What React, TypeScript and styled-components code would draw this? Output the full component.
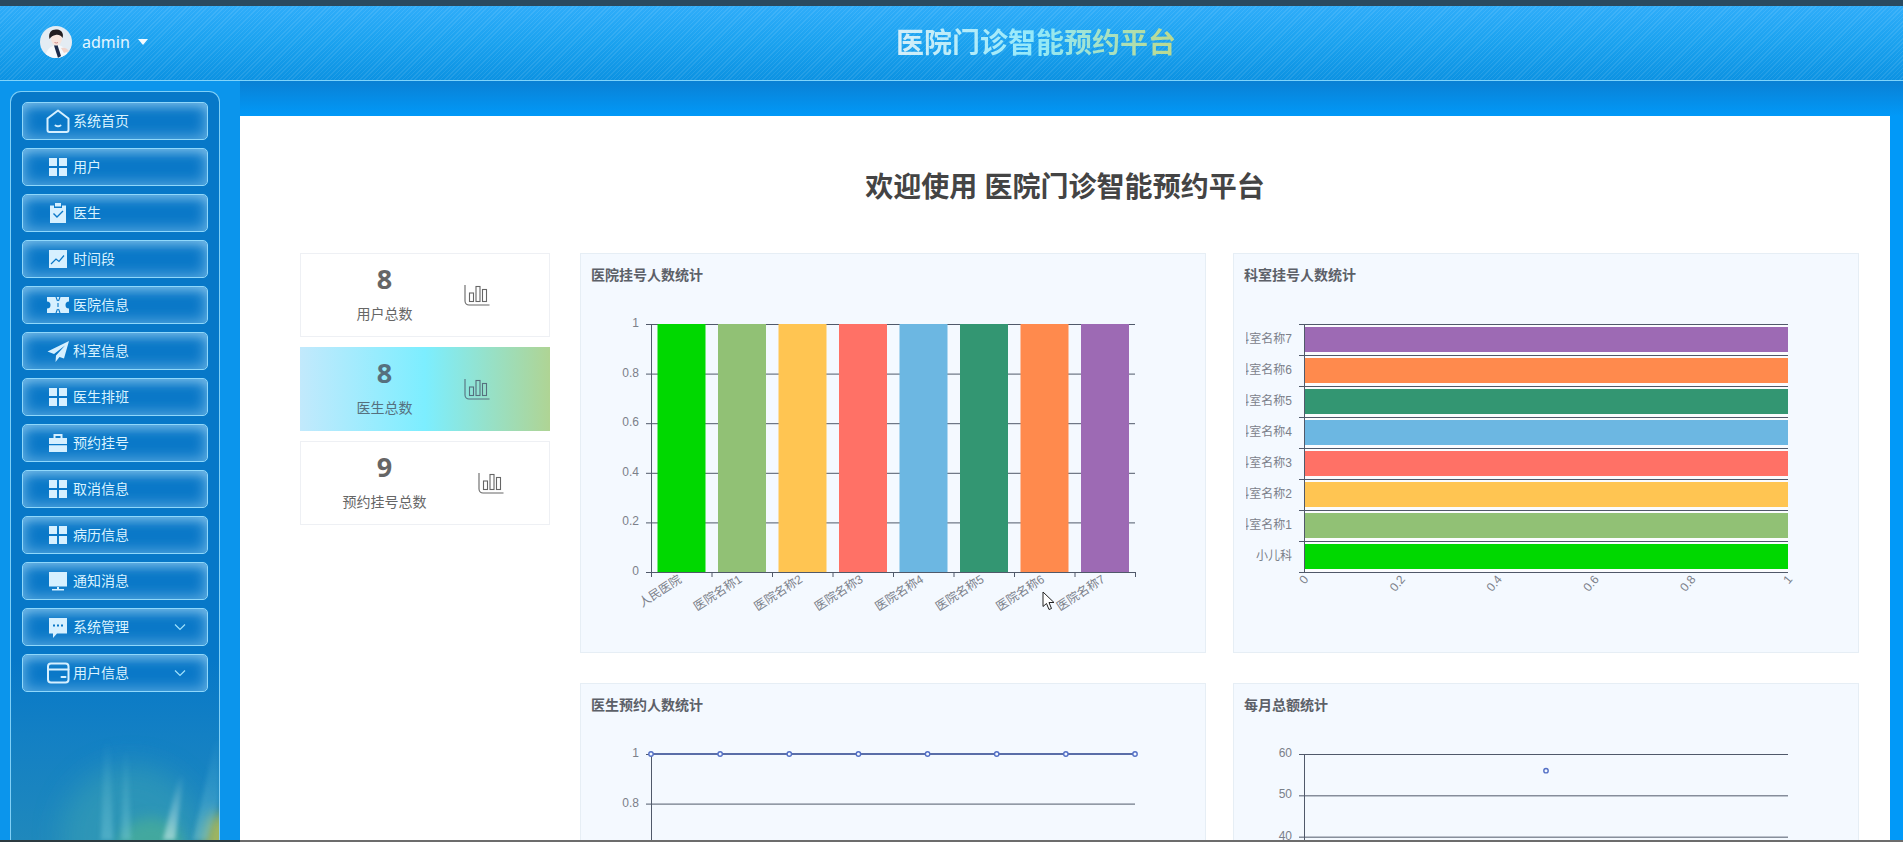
import React from "react";
import styled, { createGlobalStyle } from "styled-components";

const Global = createGlobalStyle`
  html, body { margin: 0; padding: 0; height: 100%; overflow: hidden; }
  #root { height: 100%; }
  * { box-sizing: border-box; }
  body { font-family: "Noto Sans", "Noto Sans CJK SC", sans-serif; }
`;

const Page = styled.div`
  position: relative;
  height: 842px;
  display: flex;
  flex-direction: column;
  overflow: hidden;
  background: #0d96ec;
`;
const TopStrip = styled.div`
  height: 6px;
  flex: none;
  background: #2a4a60;
`;
const Header = styled.header`
  height: 75px;
  flex: none;
  display: flex;
  align-items: center;
  padding-bottom: 2px;
  border-bottom: 1px solid #7fd4fb;
  background:
    repeating-linear-gradient(135deg, rgba(255,255,255,.09) 0 1px, rgba(255,255,255,0) 1px 3px),
    linear-gradient(180deg, #2fadfa 0%, #1ba2ef 50%, #0c92e2 100%);
`;
const UserBlock = styled.div`
  width: 169px;
  flex: none;
  padding-left: 40px;
  display: flex;
  align-items: center;
`;
const Avatar = styled.svg`
  width: 32px;
  height: 32px;
  border-radius: 50%;
  flex: none;
`;
const UserName = styled.span`
  margin-left: 10px;
  font-size: 16px;
  color: #e4f6ff;
  line-height: 20px;
`;
const Caret = styled.i`
  margin-left: 8px;
  margin-top: -1px;
  width: 0;
  height: 0;
  border-left: 5px solid transparent;
  border-right: 5px solid transparent;
  border-top: 6px solid #f4fbff;
`;
const AppTitle = styled.h1`
  flex: 1;
  margin: 0;
  display: flex;
  justify-content: center;
  font-size: 28px;
  font-weight: 700;
  line-height: 36px;
`;
const AppTitleText = styled.span`
  background: linear-gradient(90deg, #d6eef8 0%, #92e9fa 50%, #bcd98c 100%);
  -webkit-background-clip: text;
  background-clip: text;
  color: transparent;
`;
const Body = styled.div`
  flex: 1;
  min-height: 0;
  display: flex;
`;
const Sidebar = styled.aside`
  width: 240px;
  flex: none;
  padding: 10px 20px 0 10px;
  background: #0b95ec;
  display: flex;
`;
const SidePanel = styled.nav`
  position: relative;
  flex: 1;
  overflow: hidden;
  border: 1px solid #7fd0f7;
  border-bottom: none;
  border-radius: 11px 11px 0 0;
  background: linear-gradient(180deg, #0778c8 0%, #0778c8 76%, #1380c4 86%, #1f88bc 100%);
  padding: 10px 11px 0;
  display: flex;
  flex-direction: column;
  gap: 8px;
`;
const Aurora = styled.svg`
  position: absolute;
  left: 0;
  bottom: 0;
  width: 208px;
  height: 190px;
`;
const MenuButton = styled.a`
  position: relative;
  height: 38px;
  flex: none;
  display: flex;
  align-items: center;
  padding-left: 23px;
  border: 1px solid #8fd8fb;
  border-radius: 5px;
  background: #0a78c8;
  box-shadow: inset 0 0 14px 2px rgba(190, 232, 255, .45), inset 0 7px 9px -3px rgba(210, 240, 255, .28);
  color: #d9f3ff;
  font-size: 14px;
`;
const MenuIcon = styled.svg`
  width: 24px;
  height: 24px;
  flex: none;
  margin-right: 3px;
`;
const MenuLabel = styled.span`
  flex: 1;
  line-height: 20px;
  margin-top: -1px;
`;
const Chevron = styled.svg`
  width: 12px;
  height: 8px;
  margin-right: 21px;
  flex: none;
`;
const Main = styled.main`
  flex: 1;
  min-width: 0;
  display: flex;
  flex-direction: column;
  overflow: hidden;
  padding-right: 13px;
  background: #0199f8;
`;
const Band = styled.div`
  height: 35px;
  flex: none;
  margin-right: -13px;
  background: linear-gradient(180deg, #0a80d4 0%, #0199f8 100%);
`;
const Content = styled.section`
  flex: 1;
  min-height: 0;
  overflow: hidden;
  background: #fff;
  padding: 50px 31px 0 60px;
`;
const PageTitle = styled.h2`
  margin: 0 -31px 47px -60px;
  text-align: center;
  font-size: 28px;
  line-height: 40px;
  font-weight: 700;
  color: #444;
`;
const Dashboard = styled.div`
  display: flex;
  align-items: flex-start;
  gap: 30px;
`;
const StatColumn = styled.div`
  width: 250px;
  flex: none;
  display: flex;
  flex-direction: column;
  gap: 10px;
`;
const StatCard = styled.div<{ $active?: boolean }>`
  height: 84px;
  display: flex;
  align-items: center;
  justify-content: center;
  gap: 51px;
  padding-right: 4px;
  border: ${(p) => (p.$active ? "none" : "1px solid #eef0f4")};
  color: ${(p) => (p.$active ? "#56707e" : "#666")};
  background: ${(p) =>
    p.$active ? "linear-gradient(90deg, #c2e9fc 0%, #7ceeff 50%, #afd494 100%)" : "#fff"};
`;
const StatText = styled.div`
  display: flex;
  flex-direction: column;
  align-items: center;
  margin-top: -9px;
`;
const StatNumber = styled.strong`
  font-size: 27px;
  line-height: 36px;
  font-weight: 700;
`;
const StatLabel = styled.span`
  margin-top: 6px;
  font-size: 14px;
  line-height: 22px;
  margin-bottom: -4px;
`;
const StatIcon = styled.svg`
  width: 26px;
  height: 22px;
  flex: none;
`;
const ChartGrid = styled.div`
  display: grid;
  grid-template-columns: 626px 626px;
  grid-auto-rows: 400px;
  gap: 30px 27px;
`;
const ChartCard = styled.article`
  border: 1px solid #e6eef5;
  background: #f4f9ff;
  padding: 10px;
`;
const ChartTitle = styled.h3`
  margin: 0;
  height: 22px;
  font-size: 14px;
  line-height: 21px;
  font-weight: 700;
  color: #5c6068;
`;
const ChartSvg = styled.svg`
  display: block;
  width: 604px;
  height: 356px;
  font-family: "Liberation Sans", "Noto Sans CJK SC", sans-serif;
  font-size: 12px;
`;
const BottomStrip = styled.div`
  height: 2px;
  flex: none;
  background: linear-gradient(90deg, #2c3a40 0 240px, #6c6c6c 240px);
`;
const Pointer = styled.svg`
  position: absolute;
  left: 1042px;
  top: 591px;
  width: 14px;
  height: 20px;
`;

const ICON = "#d6f0ff";
const CUT = "#0a78c8";

type IconName = "home" | "grid" | "clip" | "chart" | "ticket" | "plane" | "case" | "monitor" | "chat" | "wallet";

function Glyph({ name }: { name: IconName }) {
  switch (name) {
    case "home":
      return (
        <g fill="none" stroke={ICON} strokeWidth="2" strokeLinejoin="round" strokeLinecap="round">
          <path d="M12 1.5 L22.5 9.5 V21 a2 2 0 0 1-2 2 H3.5 a2 2 0 0 1-2-2 V9.5 Z" />
          <path d="M9.5 16.5 q2.5 1.6 5 0" />
        </g>
      );
    case "grid":
      return (
        <path
          fill={ICON}
          d="M3 3 h8 v8 H3 Z M13 3 h8 v8 h-8 Z M3 13 h8 v8 H3 Z M13 13 h8 v8 h-8 Z"
        />
      );
    case "clip":
      return (
        <g>
          <path fill={ICON} d="M4 4.5 h4 v2.5 h8 V4.5 h4 V22 H4 Z M9 2 h6 v3.5 H9 Z" />
          <path fill="none" stroke={CUT} strokeWidth="1.4" d="M7.5 12.5 l3.5 3.5 6-6" />
        </g>
      );
    case "chart":
      return (
        <g>
          <rect x="3" y="3" width="18" height="18" fill={ICON} />
          <path fill="none" stroke={CUT} strokeWidth="1.2" d="M5 17 l5-5 3 2.5 5-6" />
        </g>
      );
    case "ticket":
      return (
        <g>
          <path fill={ICON} d="M1 4 h22 v4.5 a3.5 3.5 0 0 0 0 7 V20 H1 v-4.5 a3.5 3.5 0 0 0 0-7 Z" />
          <path fill="none" stroke={CUT} strokeWidth="1.1" d="M10 4 l1.5 4 M14 4 l-1.5 4 M10 20 l1.5-4 M14 20 l-1.5-4 M12 10 v4" />
        </g>
      );
    case "plane":
      return <path fill={ICON} d="M23 2 L1.5 12.5 L8 15 L19 6.5 L10 16.5 L9.5 23 L13.5 18 L18 19.5 Z" />;
    case "case":
      return (
        <g>
          <path fill="none" stroke={ICON} strokeWidth="2" d="M8.5 7 V4 h7 v3" />
          <path fill={ICON} d="M3 7 h18 v6 H3 Z M3 14.2 h18 V21 H3 Z" />
        </g>
      );
    case "monitor":
      return <path fill={ICON} d="M3 3 h18 v14.5 H3 Z M11 18 h2 v2 h5 v1.5 H6 V20 h5 Z" />;
    case "chat":
      return (
        <g>
          <path fill={ICON} d="M3 3 h18 v15.5 H11 L7 23 V18.5 H3 Z" />
          <path fill={CUT} d="M7 9.5 h2 v2 H7 Z M11 9.5 h2 v2 h-2 Z M15 9.5 h2 v2 h-2 Z" />
        </g>
      );
    case "wallet":
      return (
        <g fill="none" stroke={ICON} strokeWidth="2" strokeLinecap="round">
          <rect x="2" y="2.5" width="20.5" height="19" rx="3" />
          <path d="M2 8.5 H22.5 M15.5 16 h4" />
        </g>
      );
  }
}

const MENU: { icon: IconName; label: string; more?: boolean }[] = [
  { icon: "home", label: "系统首页" },
  { icon: "grid", label: "用户" },
  { icon: "clip", label: "医生" },
  { icon: "chart", label: "时间段" },
  { icon: "ticket", label: "医院信息" },
  { icon: "plane", label: "科室信息" },
  { icon: "grid", label: "医生排班" },
  { icon: "case", label: "预约挂号" },
  { icon: "grid", label: "取消信息" },
  { icon: "grid", label: "病历信息" },
  { icon: "monitor", label: "通知消息" },
  { icon: "chat", label: "系统管理", more: true },
  { icon: "wallet", label: "用户信息", more: true },
];

const STATS = [
  { value: "8", label: "用户总数" },
  { value: "8", label: "医生总数", active: true },
  { value: "9", label: "预约挂号总数" },
];

const COLORS = ["#00d800", "#91c175", "#ffc552", "#ff7166", "#6cb7e2", "#339672", "#ff8a4d", "#9d6ab4"];
const AXIS = "#50596a";
const LABEL = "#7b808a";
const L = 60;
const R = 544;
const T = 38;
const B = 286;
const W = R - L;
const H = B - T;

function YTicks({ labels }: { labels: string[] }) {
  const step = H / (labels.length - 1);
  return (
    <g>
      {labels.map((t, i) => {
        const y = T + i * step;
        return (
          <g key={t}>
            <line x1={L - 5} x2={R} y1={y + 0.5} y2={y + 0.5} stroke={AXIS} />
            <text x={L - 12} y={y + 3} textAnchor="end" fill={LABEL}>
              {t}
            </text>
          </g>
        );
      })}
      <line x1={L + 0.5} x2={L + 0.5} y1={T} y2={B + 120} stroke={AXIS} />
    </g>
  );
}

function HospitalChart() {
  const names = ["人民医院", "医院名称1", "医院名称2", "医院名称3", "医院名称4", "医院名称5", "医院名称6", "医院名称7"];
  const band = W / 8;
  return (
    <ChartSvg viewBox="0 0 604 356">
      {["1", "0.8", "0.6", "0.4", "0.2", "0"].map((t, i) => {
        const y = T + (i * H) / 5;
        return (
          <g key={t}>
            <line x1={L - 5} x2={R} y1={y + 0.5} y2={y + 0.5} stroke={AXIS} />
            <text x={L - 12} y={y + 3} textAnchor="end" fill={LABEL}>
              {t}
            </text>
          </g>
        );
      })}
      <line x1={L + 0.5} x2={L + 0.5} y1={T} y2={B} stroke={AXIS} />
      {COLORS.map((c, i) => (
        <rect key={c} x={L + band * i + 6.5} y={T} width={48} height={H} fill={c} />
      ))}
      {Array.from({ length: 9 }, (_, i) => (
        <line key={i} x1={L + band * i + 0.5} x2={L + band * i + 0.5} y1={B} y2={B + 5} stroke={AXIS} />
      ))}
      {names.map((n, i) => {
        const x = L + band * i + band / 2 - 1;
        return (
          <text key={n} x={x} y={B + 10} textAnchor="end" fill={LABEL} transform={`rotate(-33 ${x} ${B + 6})`}>
            {n}
          </text>
        );
      })}
    </ChartSvg>
  );
}

function DepartmentChart() {
  const names = ["科室名称7", "科室名称6", "科室名称5", "科室名称4", "科室名称3", "科室名称2", "科室名称1", "小儿科"];
  const band = H / 8;
  const order = [...COLORS].reverse();
  return (
    <ChartSvg viewBox="0 0 604 356">
      <defs>
        <clipPath id="deptLabels">
          <rect x="2" y="0" width="60" height="356" />
        </clipPath>
      </defs>
      <rect x={L} y={T} width={W} height={H} fill="#fbfcfe" />
      <g clipPath="url(#deptLabels)">
        {names.map((n, i) => (
          <text key={n} x={L - 12} y={T + band * i + 19} textAnchor="end" fill={LABEL}>
            {n}
          </text>
        ))}
      </g>
      {names.map((n, i) => {
        const y = T + band * i;
        return (
          <g key={n}>
            <line x1={L - 5} x2={R} y1={y + 0.5} y2={y + 0.5} stroke={AXIS} />
            <rect x={L} y={y + 3} width={W} height={25} fill={order[i]} />
          </g>
        );
      })}
      <line x1={L - 5} x2={R} y1={B + 0.5} y2={B + 0.5} stroke={AXIS} />
      <line x1={L + 0.5} x2={L + 0.5} y1={T} y2={B} stroke={AXIS} />
      {["0", "0.2", "0.4", "0.6", "0.8", "1"].map((t, i) => {
        const x = L + (i * W) / 5 + 2;
        return (
          <text key={t} x={x} y={B + 9} textAnchor="end" fill={LABEL} transform={`rotate(-50 ${x} ${B + 5})`}>
            {t}
          </text>
        );
      })}
    </ChartSvg>
  );
}

function DoctorChart() {
  const points = Array.from({ length: 8 }, (_, i) => L + (i * W) / 7);
  return (
    <ChartSvg viewBox="0 0 604 356">
      <YTicks labels={["1", "0.8", "0.6", "0.4", "0.2", "0"]} />
      <line x1={L} x2={R} y1={T} y2={T} stroke="#5a6ea8" strokeWidth="2" />
      {points.map((x) => (
        <circle key={x} cx={x} cy={T} r="2.2" fill="#f4f9ff" stroke="#5470c6" strokeWidth="1.4" />
      ))}
    </ChartSvg>
  );
}

function MonthlyChart() {
  return (
    <ChartSvg viewBox="0 0 604 356">
      <YTicks labels={["60", "50", "40", "30", "20", "10", "0"]} />
      <circle cx="302" cy="54.7" r="2.2" fill="#f4f9ff" stroke="#5470c6" strokeWidth="1.4" />
    </ChartSvg>
  );
}

const CHARTS = [
  { title: "医院挂号人数统计", chart: <HospitalChart /> },
  { title: "科室挂号人数统计", chart: <DepartmentChart /> },
  { title: "医生预约人数统计", chart: <DoctorChart /> },
  { title: "每月总额统计", chart: <MonthlyChart /> },
];

export default function App() {
  return (
    <Page>
      <Global />
      <TopStrip />
      <Header>
        <UserBlock>
          <Avatar viewBox="0 0 32 32">
            <rect width="32" height="32" fill="#e4ecf3" />
            <path d="M5 32 C6 24 11 19 17 19 C23 19 27 24 28 32 Z" fill="#f6f9fc" />
            <path d="M14 19.5 L17.5 19 L21 30 L18 32 Z" fill="#1c2c4c" />
            <path d="M21 22 C24 21 27 22 29 25 L24 27 Z" fill="#f0d4cc" />
            <ellipse cx="16.5" cy="12.5" rx="5.5" ry="7" fill="#f8e4dc" />
            <path d="M9.5 13 C8 6 12 3 17 3.5 C22 4 24 8 22.5 12 C21 9 18 8.5 15.5 9 C13 9.5 11 10.5 9.5 13 Z" fill="#231d20" />
            <path d="M14.5 16.5 q2 1 3.5 0" stroke="#c98080" strokeWidth=".9" fill="none" />
          </Avatar>
          <UserName>admin</UserName>
          <Caret />
        </UserBlock>
        <AppTitle>
          <AppTitleText>医院门诊智能预约平台</AppTitleText>
        </AppTitle>
      </Header>
      <Body>
        <Sidebar>
          <SidePanel>
            <Aurora viewBox="0 0 208 190">
              <defs>
                <filter id="wide" x="-60%" y="-60%" width="220%" height="220%">
                  <feGaussianBlur stdDeviation="14" />
                </filter>
                <filter id="soft" x="-60%" y="-60%" width="220%" height="220%">
                  <feGaussianBlur stdDeviation="7" />
                </filter>
                <filter id="thin" x="-100%" y="-40%" width="300%" height="180%">
                  <feGaussianBlur stdDeviation="2" />
                </filter>
                <linearGradient id="ray" x1="0" y1="1" x2="0" y2="0">
                  <stop offset="0" stopColor="#cfeef0" stopOpacity=".6" />
                  <stop offset="1" stopColor="#cfeef0" stopOpacity="0" />
                </linearGradient>
                <linearGradient id="dim" x1="0" y1="1" x2="0" y2="0">
                  <stop offset="0" stopColor="#7fd0e0" stopOpacity=".4" />
                  <stop offset="1" stopColor="#7fd0e0" stopOpacity="0" />
                </linearGradient>
              </defs>
              <ellipse cx="120" cy="185" rx="70" ry="70" fill="#3aa2b2" opacity=".55" filter="url(#wide)" />
              <ellipse cx="140" cy="198" rx="34" ry="30" fill="#4cb095" opacity=".7" filter="url(#soft)" />
              <ellipse cx="208" cy="196" rx="16" ry="34" fill="#a8b85a" opacity=".95" filter="url(#soft)" />
              <path d="M152 190 L168 125 L173 125 L164 190 Z" fill="url(#ray)" filter="url(#thin)" />
              <path d="M182 190 L203 95 L208 85 L208 150 L196 190 Z" fill="url(#dim)" filter="url(#thin)" />
              <path d="M90 190 L93 90 L99 90 L102 190 Z" fill="url(#dim)" filter="url(#thin)" />
              <path d="M110 190 L113 100 L117 100 L120 190 Z" fill="url(#dim)" filter="url(#thin)" />
            </Aurora>
            {MENU.map((m) => (
              <MenuButton key={m.label}>
                <MenuIcon viewBox="0 0 24 24">
                  <Glyph name={m.icon} />
                </MenuIcon>
                <MenuLabel>{m.label}</MenuLabel>
                {m.more && (
                  <Chevron viewBox="0 0 12 8">
                    <path d="M1 1.5 L6 6.5 L11 1.5" fill="none" stroke="#9fe2fc" strokeWidth="1.2" />
                  </Chevron>
                )}
              </MenuButton>
            ))}
          </SidePanel>
        </Sidebar>
        <Main>
          <Band />
          <Content>
            <PageTitle>欢迎使用 医院门诊智能预约平台</PageTitle>
            <Dashboard>
              <StatColumn>
                {STATS.map((s) => (
                  <StatCard key={s.label} $active={s.active}>
                    <StatText>
                      <StatNumber>{s.value}</StatNumber>
                      <StatLabel>{s.label}</StatLabel>
                    </StatText>
                    <StatIcon viewBox="0 0 26 22">
                      <g fill="none" stroke="currentColor" strokeWidth="1.1">
                        <path d="M1 1 V17 a4 4 0 0 0 4 4 H25.5" />
                        <rect x="5.5" y="9" width="4" height="8.5" />
                        <rect x="12" y="2.5" width="4" height="15" />
                        <rect x="18.5" y="5.5" width="4" height="12" />
                      </g>
                    </StatIcon>
                  </StatCard>
                ))}
              </StatColumn>
              <ChartGrid>
                {CHARTS.map((c) => (
                  <ChartCard key={c.title}>
                    <ChartTitle>{c.title}</ChartTitle>
                    {c.chart}
                  </ChartCard>
                ))}
              </ChartGrid>
            </Dashboard>
          </Content>
        </Main>
      </Body>
      <BottomStrip />
      <Pointer viewBox="0 0 14 20">
        <path d="M1 1 V15.5 L4.5 12.5 L7 18.5 L9.5 17.5 L7 11.5 L12 11.5 Z" fill="#fff" stroke="#222" strokeWidth="1" />
      </Pointer>
    </Page>
  );
}
